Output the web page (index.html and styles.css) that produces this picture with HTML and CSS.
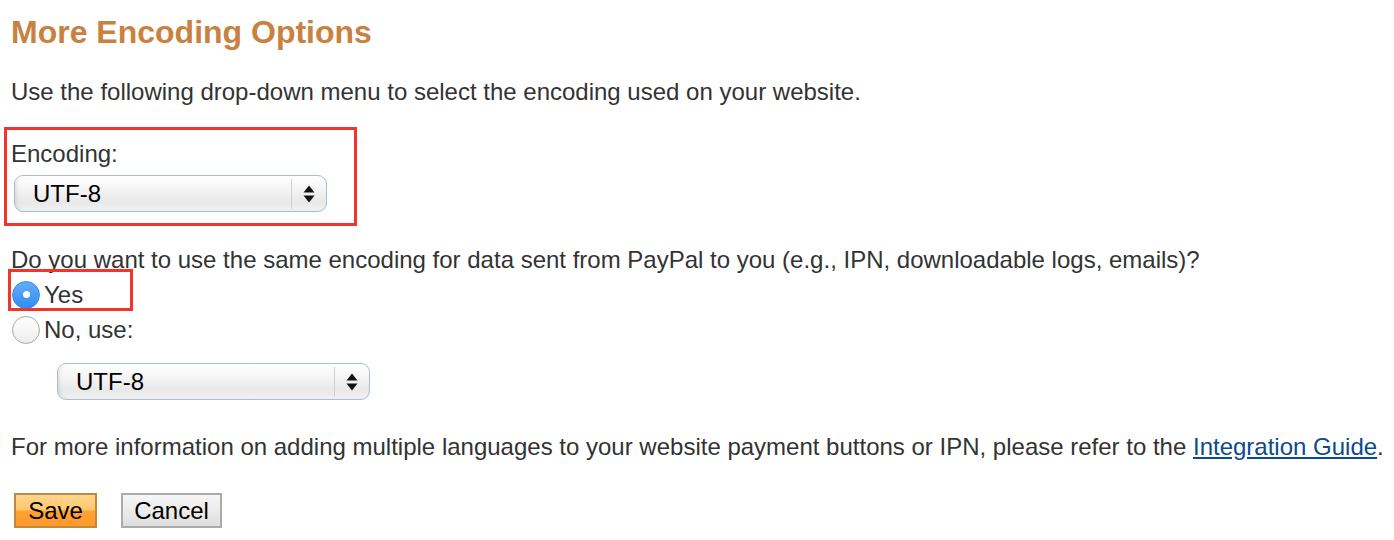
FILE: index.html
```html
<!DOCTYPE html>
<html lang="en">
<head>
<meta charset="utf-8">
<title>More Encoding Options</title>
<link rel="stylesheet" href="styles.css">
</head>
<body>
<div class="page">
  <h1 class="title">More Encoding Options</h1>
  <p class="intro">Use the following drop-down menu to select the encoding used on your website.</p>

  <div class="callout-enc">
    <div class="field-label">Encoding:</div>
    <div class="select select-primary">
      <span class="select-value">UTF-8</span>
      <span class="select-arrows">
        <svg width="12" height="20" viewBox="0 0 12 20"><path d="M6 1.5 L11.5 8.5 L0.5 8.5 Z" fill="#111"/><path d="M0.5 11.5 L11.5 11.5 L6 18.5 Z" fill="#111"/></svg>
      </span>
    </div>
  </div>

  <p class="question">Do you want to use the same encoding for data sent from PayPal to you (e.g., IPN, downloadable logs, emails)?</p>
  <div class="radio-row radio-row-marked">
    <span class="radio radio-on"></span><span class="radio-text">Yes</span>
  </div>
  <div class="radio-row">
    <span class="radio"></span><span class="radio-text">No, use:</span>
  </div>
  <div class="select select-secondary">
    <span class="select-value">UTF-8</span>
    <span class="select-arrows">
      <svg width="12" height="20" viewBox="0 0 12 20"><path d="M6 1.5 L11.5 8.5 L0.5 8.5 Z" fill="#111"/><path d="M0.5 11.5 L11.5 11.5 L6 18.5 Z" fill="#111"/></svg>
    </span>
  </div>

  <p class="info">For more information on adding multiple languages to your website payment buttons or IPN, please refer to the <a class="link" href="#">Integration Guide</a>.</p>

  <div class="actions">
    <button class="btn btn-save" type="button">Save</button>
    <button class="btn btn-cancel" type="button">Cancel</button>
  </div>
</div>
</body>
</html>
```
FILE: styles.css
```css
*, *::before, *::after { box-sizing: border-box; }
html, body { margin: 0; padding: 0; background: #fff; }
body {
  font-family: "Liberation Sans", Arial, Helvetica, sans-serif;
  color: #333;
  font-size: 24px;
}
.page {
  padding: 14px 0 0 11px;
}
.title {
  margin: 0;
  font-size: 32px;
  line-height: 37px;
  font-weight: bold;
  color: #c9813f;
}
.intro {
  margin: 27px 0 0;
  line-height: 28px;
  white-space: nowrap;
}
.callout-enc {
  margin: 21px 0 0 -7px;
  width: 353px;
  height: 99px;
  border: 3px solid #f2352b;
  padding: 10px 0 0 4px;
}
.field-label {
  line-height: 28px;
}
.select {
  display: flex;
  align-items: center;
  width: 313px;
  height: 37px;
  border: 1.5px solid #a9bed3;
  border-radius: 9px;
  background: linear-gradient(#ffffff 0%, #f7f7f7 30%, #e8e8e8 75%, #f2f2f2 100%);
  box-shadow: inset 0 1px 0 #fff, inset 3px 0 4px -2px rgba(0,0,0,0.12);
  color: #000;
}
.select-primary {
  margin: 7px 0 0 3px;
}
.select-secondary {
  margin: 16px 0 0 46px;
}
.select-value {
  flex: 1;
  padding-left: 18px;
  font-size: 24px;
  line-height: 34px;
}
.select-arrows {
  width: 35px;
  height: 30px;
  border-left: 1.5px solid #cfcfcf;
  display: flex;
  align-items: center;
  justify-content: center;
}
.select-arrows svg { display: block; }
.question {
  margin: 16px 0 0;
  line-height: 35px;
  white-space: nowrap;
}
.radio-row {
  display: flex;
  align-items: center;
  height: 35px;
  line-height: 35px;
}
.radio-row-marked {
  position: relative;
}
.radio-row-marked::after {
  content: "";
  position: absolute;
  left: -3px;
  top: -8px;
  width: 125px;
  height: 42px;
  border: 3px solid #f2352b;
}
.radio {
  width: 28px;
  height: 28px;
  margin: 0 4px 0 1px;
  border-radius: 50%;
  border: 1px solid #a9a9a9;
  background: linear-gradient(#ffffff, #ececec);
  position: relative;
}
.radio-on {
  border-color: #3a8ae6;
  background: linear-gradient(#62adfb, #2f8df0);
}
.radio-on::after {
  content: "";
  position: absolute;
  left: 9.5px;
  top: 9.5px;
  width: 7px;
  height: 7px;
  border-radius: 50%;
  background: #fff;
}
.info {
  margin: 33px 0 0;
  line-height: 28px;
  white-space: nowrap;
}
.link {
  color: #0d4a8c;
  text-decoration: underline;
}
.actions {
  display: flex;
  gap: 24px;
  margin: 32px 0 0 3px;
}
.btn {
  height: 35px;
  font-family: "Liberation Sans", Arial, Helvetica, sans-serif;
  font-size: 24px;
  color: #000;
  padding: 0;
  line-height: 31px;
  text-align: center;
  cursor: pointer;
}
.btn-save {
  width: 83px;
  border: 2px solid #c0893f;
  background: linear-gradient(#ffd68f 0%, #ffc76a 48%, #ffa233 52%, #ff9a28 100%);
}
.btn-cancel {
  width: 101px;
  border: 2px solid #ababab;
  background: linear-gradient(#f6f6f6 0%, #ececec 50%, #dddddd 100%);
}
```
